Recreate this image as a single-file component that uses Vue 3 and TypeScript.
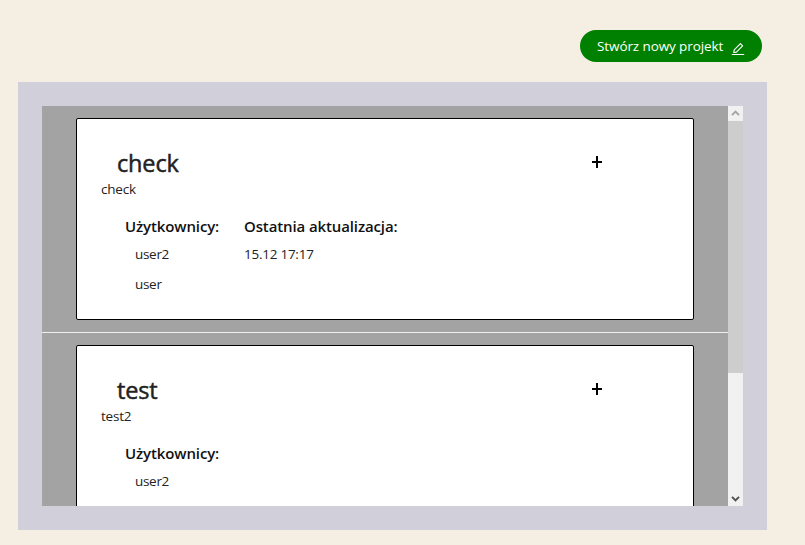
<script setup lang="ts">
interface Project {
  name: string
  description: string
  users: string[]
  updated?: string
}

const projects: Project[] = [
  { name: 'check', description: 'check', users: ['user2', 'user'], updated: '15.12 17:17' },
  { name: 'test', description: 'test2', users: ['user2'] },
]
</script>

<template>
  <main class="page">
    <header class="toolbar">
      <button class="create" type="button">
        <span class="create-label">Stwórz nowy projekt</span>
        <svg class="edit-icon" viewBox="0 0 14 14" fill="none" stroke="currentColor">
          <path d="M2.7 10.5 3.2 7.9 9.4 1.7 11.6 3.9 5.4 10.1Z" stroke-width="1.1" stroke-linejoin="round" />
          <path d="M.8 12.5H13.2" stroke-width="1" />
        </svg>
      </button>
    </header>

    <section class="panel">
      <div class="scroller">
        <ul class="list">
          <li v-for="project in projects" :key="project.name" class="item">
            <article class="card">
              <div class="head">
                <h2 class="title">{{ project.name }}</h2>
                <svg class="plus" viewBox="0 0 10 12" aria-label="Dodaj">
                  <path d="M0 6H10M5 0V12" stroke="#000" stroke-width="2" />
                </svg>
              </div>
              <p class="description">{{ project.description }}</p>
              <div class="details">
                <div class="users">
                  <h4 class="label">Użytkownicy:</h4>
                  <p v-for="user in project.users" :key="user" class="user">{{ user }}</p>
                </div>
                <div v-if="project.updated" class="updated">
                  <h4 class="label">Ostatnia aktualizacja:</h4>
                  <p class="date">{{ project.updated }}</p>
                </div>
              </div>
            </article>
          </li>
        </ul>
        <div class="scrollbar">
          <div class="arrow up">
            <svg viewBox="0 0 15 15"><path d="M4 9.1 7.5 5.6 11 9.1" fill="none" stroke="#a5a5a5" stroke-width="2" /></svg>
          </div>
          <div class="thumb"></div>
          <div class="arrow down">
            <svg viewBox="0 0 15 15"><path d="M4 5.9 7.5 9.4 11 5.9" fill="none" stroke="#505050" stroke-width="2" /></svg>
          </div>
        </div>
      </div>
    </section>
  </main>
</template>

<style>
body {
  background: #f5eee3;
  overflow: hidden;
}
</style>

<style scoped>
.page {
  box-sizing: border-box;
  width: 805px;
  height: 545px;
  padding: 30px 38px 15px 18px;
  font-family: "Segoe UI", "Open Sans", "Noto Sans", sans-serif;
  font-size: 14px;
  line-height: 22px;
  color: #222;
}
.toolbar {
  display: flex;
  justify-content: flex-end;
  padding-right: 5px;
  margin-bottom: 20px;
}
.create {
  display: flex;
  align-items: center;
  justify-content: space-between;
  box-sizing: border-box;
  width: 182px;
  height: 32px;
  padding: 0 17px;
  border: 0;
  border-radius: 16px;
  background: #008000;
  color: #fff;
  font: inherit;
}
.create-label {
  white-space: nowrap;
  font-size: 13.5px;
  letter-spacing: -0.1px;
}
.edit-icon {
  width: 14px;
  height: 14px;
  margin-top: 5px;
}
.panel {
  box-sizing: border-box;
  width: 749px;
  height: 448px;
  padding: 24px;
  background: #d0cfda;
}
.scroller {
  display: flex;
  height: 400px;
  overflow: hidden;
}
.list {
  flex: 1;
  margin: 0;
  padding: 0;
  list-style: none;
  background: #a3a3a3;
}
.item {
  box-sizing: border-box;
  height: 227px;
  padding: 12px 34px;
  border-bottom: 1px solid #f0f0f0;
}
.card {
  box-sizing: border-box;
  height: 202px;
  padding: 24px;
  border: 1px solid #000;
  border-radius: 2px;
  background: #fff;
}
.head {
  display: flex;
  justify-content: space-between;
  height: 35px;
  padding: 0 67px 0 16px;
}
.title {
  margin: 4px 0 0;
  font-size: 23.5px;
  font-weight: 400;
  line-height: 32px;
  letter-spacing: -0.15px;
  -webkit-text-stroke: 0.5px currentColor;
}
.plus {
  width: 10px;
  height: 12px;
  margin-top: 13px;
}
.description {
  margin: 0;
  font-size: 13.5px;
  letter-spacing: -0.2px;
}
.details {
  display: flex;
  padding: 15px 0 0 24px;
}
.users {
  width: 119px;
}
.label {
  margin: 0 0 5px;
  color: #111;
  font-size: 15px;
  font-weight: 600;
  line-height: 23px;
  letter-spacing: -0.12px;
  white-space: nowrap;
}
.user,
.date {
  margin: 0 0 8px;
  font-size: 13.5px;
  letter-spacing: -0.3px;
}
.date {
  letter-spacing: -0.25px;
}
.user {
  padding-left: 10px;
}
.scrollbar {
  display: flex;
  flex-direction: column;
  width: 15px;
  background: #f1f1f1;
}
.arrow,
.arrow svg {
  display: block;
  width: 15px;
  height: 15px;
}
.thumb {
  height: 252px;
  background: #cdcdcd;
}
.down {
  margin-top: auto;
}
</style>
